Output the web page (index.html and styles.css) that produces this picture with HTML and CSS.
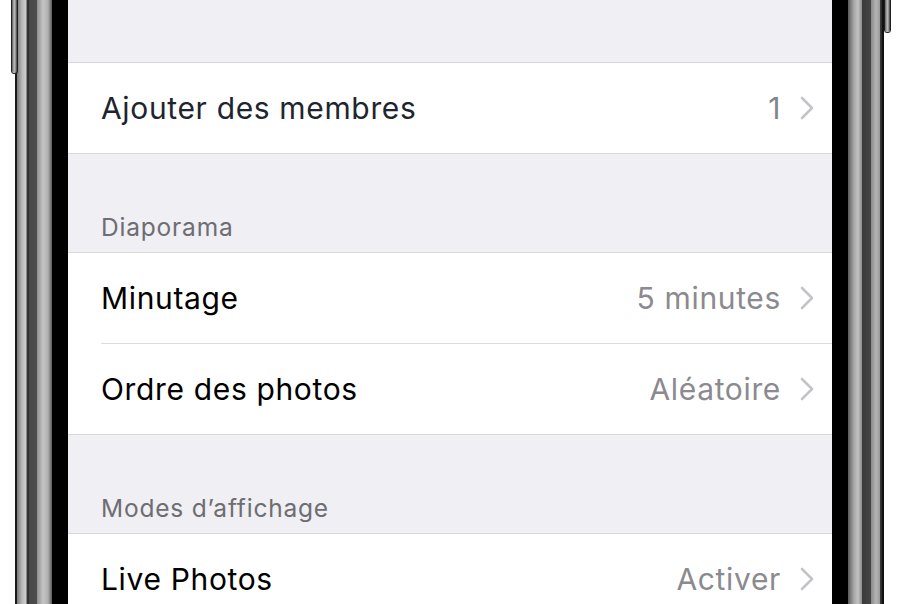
FILE: index.html
```
<!DOCTYPE html>
<html lang="fr">
<head>
<meta charset="utf-8">
<title>Réglages</title>
<link rel="stylesheet" href="styles.css">
</head>
<body>
<div class="device">
  <div class="bezel bezel-left">
    <div class="side-button side-button-left"></div>
  </div>
  <main class="screen">
    <div class="top-space"></div>
    <section class="group">
      <div class="row row-first">
        <span class="label label-dark">Ajouter des membres</span>
        <span class="value value-blue">1</span>
        <svg class="chevron" viewBox="0 0 14 24" width="14" height="24"><path d="M2 2 L12 12 L2 22" /></svg>
      </div>
    </section>
    <div class="header"><span>Diaporama</span></div>
    <section class="group">
      <div class="row">
        <span class="label">Minutage</span>
        <span class="value">5 minutes</span>
        <svg class="chevron" viewBox="0 0 14 24" width="14" height="24"><path d="M2 2 L12 12 L2 22" /></svg>
      </div>
      <div class="row">
        <span class="label">Ordre des photos</span>
        <span class="value">Aléatoire</span>
        <svg class="chevron" viewBox="0 0 14 24" width="14" height="24"><path d="M2 2 L12 12 L2 22" /></svg>
      </div>
    </section>
    <div class="header"><span>Modes d’affichage</span></div>
    <section class="group">
      <div class="row">
        <span class="label">Live Photos</span>
        <span class="value">Activer</span>
        <svg class="chevron" viewBox="0 0 14 24" width="14" height="24"><path d="M2 2 L12 12 L2 22" /></svg>
      </div>
    </section>
  </main>
  <div class="bezel bezel-right">
    <div class="side-button side-button-right"></div>
  </div>
</div>
</body>
</html>
```
FILE: styles.css
```
* { box-sizing: border-box; }
html, body {
  margin: 0;
  padding: 0;
  width: 900px;
  height: 604px;
  overflow: hidden;
  background: #ffffff;
  font-family: Inter, "Noto Sans", "Liberation Sans", sans-serif;
}
.device {
  display: flex;
  width: 900px;
  height: 604px;
}
.bezel {
  position: relative;
  width: 68px;
  flex: none;
  height: 100%;
}
.bezel-left {
  background: linear-gradient(to right,
    #ffffff 0, #ffffff 15px,
    #1a1a1a 15px, #1a1a1a 17px,
    #7a7a7a 17px, #b8b8b8 22px, #d0d0d0 26px,
    #3a3a3a 27px, #2a2a2a 29px,
    #474747 29px, #4d4d4d 37px,
    #8e8e8e 37px, #c4c4c4 43px, #b0b0b0 48px, #5a5a5a 52px,
    #000000 52px, #000000 68px);
}
.bezel-right {
  background: linear-gradient(to right,
    #000000 0, #000000 16px,
    #5a5a5a 16px, #a8a8a8 22px, #c2c2c2 26px, #8a8a8a 30px,
    #3a3a3a 30px, #454545 39px,
    #8a8a8a 39px, #b5b5b5 44px, #9a9a9a 48px,
    #3c3c3c 48px, #2a2a2a 50px,
    #111111 50px, #111111 52px,
    #ffffff 52px, #ffffff 68px);
}
.side-button {
  position: absolute;
  top: 0;
  background: linear-gradient(to right, #5c5c5c, #bdbdbd 45%, #8a8a8a 75%, #3a3a3a);
  border-bottom-left-radius: 3px;
  border-bottom-right-radius: 3px;
  box-shadow: 0 0 0 1px #1e1e1e;
}
.side-button-left {
  left: 12px;
  width: 5px;
  height: 73px;
}
.side-button-right {
  left: 53px;
  width: 5px;
  height: 32px;
}
.screen {
  flex: 1;
  height: 100%;
  background: #efeff4;
  overflow: hidden;
}
.top-space {
  height: 62px;
}
.group {
  background: #ffffff;
  border-top: 1px solid #d8d8dd;
  border-bottom: 1px solid #d8d8dd;
  padding-left: 33px;
}
.row {
  display: flex;
  align-items: center;
  height: 90px;
  padding-right: 18px;
}
.row + .row {
  height: 91px;
  border-top: 1px solid #dcdce0;
}
.label {
  flex: 1;
  font-size: 30px;
  color: #000000;
  letter-spacing: 0.65px;
}
.label-dark {
  color: #1e252e;
}
.value {
  font-size: 30px;
  color: #8a8a8f;
  margin-right: 19px;
  letter-spacing: 0.65px;
}
.value-blue {
  color: #7f868e;
}
.chevron {
  display: block;
  flex: none;
}
.chevron path {
  fill: none;
  stroke: #c4c4c8;
  stroke-width: 2.6;
  stroke-linecap: round;
  stroke-linejoin: round;
}
.header {
  height: 98px;
  display: flex;
  align-items: flex-end;
  padding-left: 33px;
  padding-bottom: 10px;
}
.header span {
  font-size: 24.5px;
  color: #6d6d72;
  letter-spacing: 0.8px;
}
```
